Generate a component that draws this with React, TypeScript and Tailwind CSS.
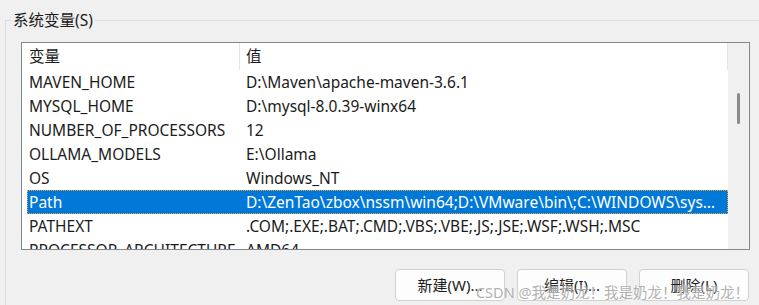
import React from 'react'

const rows = [
  { name: 'MAVEN_HOME', value: 'D:\\Maven\\apache-maven-3.6.1' },
  { name: 'MYSQL_HOME', value: 'D:\\mysql-8.0.39-winx64' },
  { name: 'NUMBER_OF_PROCESSORS', value: '12' },
  { name: 'OLLAMA_MODELS', value: 'E:\\Ollama' },
  { name: 'OS', value: 'Windows_NT' },
  {
    name: 'Path',
    value:
      'D:\\ZenTao\\zbox\\nssm\\win64;D:\\VMware\\bin\\;C:\\WINDOWS\\system32;C:\\WINDOWS;C:\\WINDOWS\\System32\\Wbem',
    selected: true,
  },
  { name: 'PATHEXT', value: '.COM;.EXE;.BAT;.CMD;.VBS;.VBE;.JS;.JSE;.WSF;.WSH;.MSC' },
  { name: 'PROCESSOR_ARCHITECTURE', value: 'AMD64' },
]

const font = { fontFamily: '"Noto Sans", "Noto Sans CJK SC", sans-serif' }

const Btn = ({ label }: { label: string }) => (
  <button className="w-[110px] h-[32px] rounded-[4px] border border-[#d0d0d0] bg-[#fdfdfd] text-[15px] text-[#1b1b1b]">
    {label}
  </button>
)

const App = () => {
  return (
    <div className="relative w-[759px] h-[305px] overflow-hidden bg-[#f0f0f0] text-black" style={font}>
      <fieldset className="ml-[5px] mt-[10px] h-[400px] border-t border-l border-[#dcdcdc] pl-[15px]">
        <legend className="-ml-[10px] px-[2px] text-[15.5px] leading-[20px] text-[#1b1b1b]">系统变量(S)</legend>

        {/* list */}
        <div className="mt-[12px] w-[729px] h-[208px] border border-[#828790] bg-white flex">
          <div className="flex-1 flex flex-col overflow-hidden">
            {/* header */}
            <div className="h-[27px] flex items-center text-[15.5px] text-[#1b1b1b] shrink-0">
              <div className="w-[218px] pl-[7px] h-full flex items-center border-r border-[#e5e5e5]">变量</div>
              <div className="pl-[6px] flex-1 h-full flex items-center border-r border-[#e5e5e5]">值</div>
            </div>
            {/* rows */}
            <div className="flex flex-col pl-[5px]">
              {rows.map((r) => (
                <div
                  key={r.name}
                  className={
                    r.selected
                      ? 'h-[24px] pt-[2px] shrink-0 flex items-center text-[15.5px] bg-[#0078d7] text-white border border-dotted border-[#f5a040]'
                      : 'h-[24px] pt-[2px] shrink-0 flex items-center text-[15.5px] text-[#1b1b1b] border border-transparent'
                  }
                >
                  <div className="w-[218px] pl-[1px] whitespace-nowrap overflow-hidden">{r.name}</div>
                  <div className="flex-1 truncate pr-[8px]">{r.value}</div>
                </div>
              ))}
            </div>
          </div>
          {/* scrollbar */}
          <div className="w-[21px] bg-[#f0f0f0] flex flex-col items-center pt-[50px] shrink-0">
            <div className="w-[3px] h-[31px] rounded-full bg-[#8a8a8a]" />
          </div>
        </div>

        {/* buttons */}
        <div className="w-[729px] mt-[19px] flex justify-end gap-[12px] pr-[1px]">
          <Btn label="新建(W)..." />
          <Btn label="编辑(I)..." />
          <Btn label="删除(L)" />
        </div>
      </fieldset>

      {/* watermark */}
      <div className="absolute right-[10px] top-[282px] text-[14.5px] text-[#9c9c9c]/80 whitespace-nowrap [text-shadow:0_0_2px_white]">
        CSDN @我是奶龙！我是奶龙！我是奶龙！
      </div>
    </div>
  )
}

export default App
